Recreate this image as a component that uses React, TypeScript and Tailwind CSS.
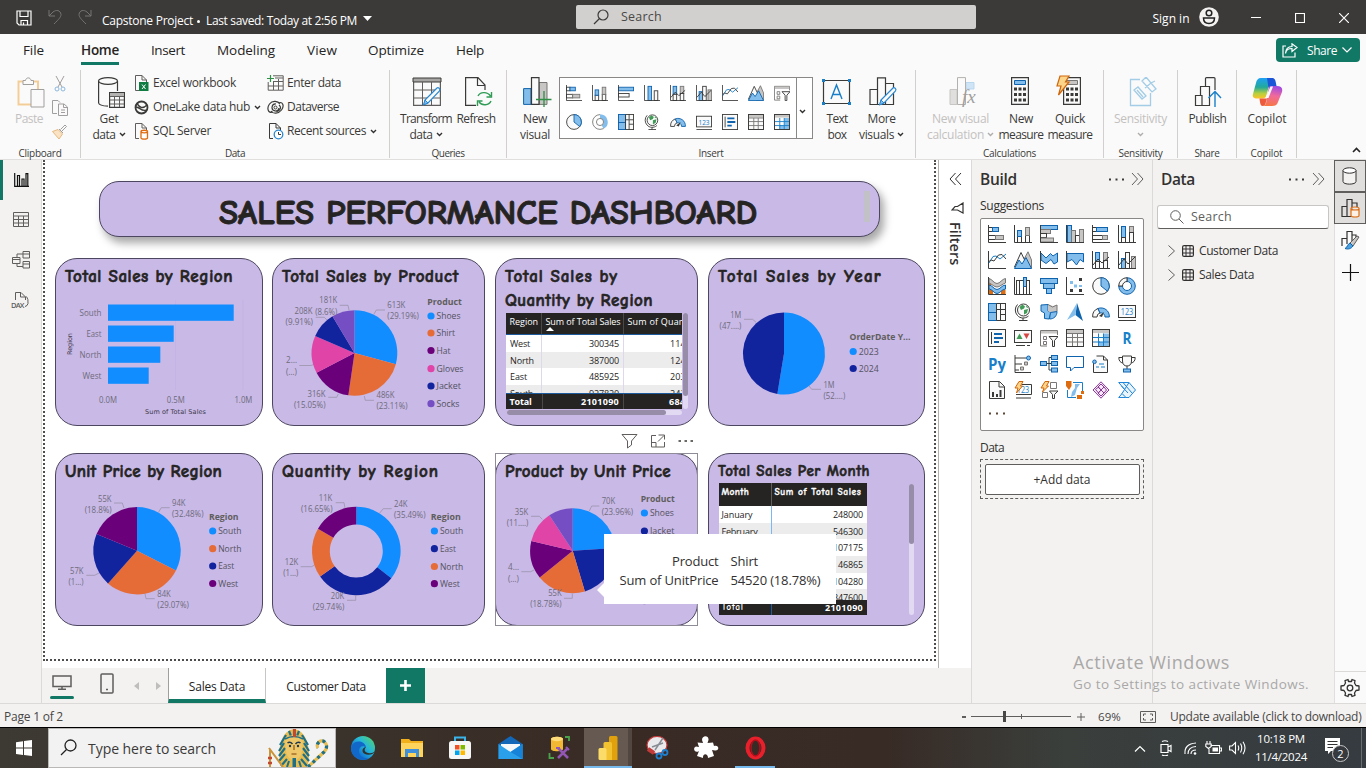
import React, { useLayoutEffect, useRef, useState } from "react";

/* ---------- text ---------- */

function Fit({ w, className = "", children }: { w: number; className?: string; children: string }) {
  const ref = useRef<HTMLSpanElement>(null);
  const [spacing, setSpacing] = useState<number | null>(null);
  useLayoutEffect(() => {
    if (ref.current && spacing === null) {
      setSpacing((w - ref.current.getBoundingClientRect().width) / children.length);
    }
  }, [w, children, spacing]);
  return (
    <span ref={ref} className={"inline-block shrink-0 whitespace-pre " + className} style={{ letterSpacing: spacing === null ? undefined : spacing + "px" }}>
      {children}
    </span>
  );
}

/* ---------- icon drawing ---------- */

type Shape = [string, string] | [string, string, number, number, number, number];

const KINDS: Record<string, { fill: string; stroke: string }> = {
  k: { fill: "none", stroke: "#3a3a38" },
  w: { fill: "#fafafa", stroke: "#3a3a38" },
  b: { fill: "#83bdeb", stroke: "#0f63ad" },
  B: { fill: "none", stroke: "#1a7fc9" },
  g: { fill: "#c8c6c4", stroke: "#797775" },
  G: { fill: "none", stroke: "#797775" },
  f: { fill: "#3a3a38", stroke: "none" },
  F: { fill: "#83bdeb", stroke: "none" },
  D: { fill: "#0f63ad", stroke: "none" },
  L: { fill: "#c8c6c4", stroke: "none" },
  o: { fill: "#dd6b10", stroke: "none" },
  O: { fill: "#fcd48a", stroke: "#d0660a" },
  e: { fill: "none", stroke: "#2f8f46" },
  E: { fill: "#3f9b55", stroke: "none" },
  r: { fill: "#d64540", stroke: "none" },
  u: { fill: "#f7e9f9", stroke: "#8a3a96" },
  w2: { fill: "#fff", stroke: "#0f63ad" },
  B2: { fill: "#eaf4fd", stroke: "#1f86d8" },
};

const AX = "M.5 0V17.5H18";
const ICONS: Record<string, Shape[]> = {
  bar1: [["w", "r", 0.5, 2.5, 4, 4], ["b", "r", 4.5, 2.5, 6, 4], ["w", "r", 0.5, 10.5, 7, 4], ["g", "r", 7.5, 10.5, 8, 4], ["k", AX]],
  col1: [["w", "r", 3.5, 11.5, 4, 6], ["b", "r", 3.5, 5.5, 4, 6], ["w", "r", 11.5, 10.5, 4, 7], ["g", "r", 11.5, 2.5, 4, 8], ["k", AX]],
  barS: [["b", "r", 0.5, 2.5, 17, 4], ["w", "r", 0.5, 9.5, 12, 4], ["k", AX]],
  colS: [["b", "r", 4.5, 1.5, 4, 16], ["w", "r", 11.5, 6.5, 4, 11], ["k", AX]],
  bar2: [["b", "r", 0.5, 0.5, 17, 4], ["g", "r", 0.5, 4.5, 10, 4], ["w", "r", 0.5, 8.5, 6, 4], ["g", "r", 0.5, 13, 13, 4], ["k", AX]],
  col2: [["b", "r", 1.5, 0.5, 4, 17], ["g", "r", 5.5, 5.5, 4, 12], ["w", "r", 9.5, 10.5, 4, 7], ["g", "r", 13.5, 4.5, 4, 13], ["k", AX]],
  bar3: [["w", "r", 0.5, 2.5, 4, 4], ["b", "r", 4.5, 2.5, 11, 4], ["w", "r", 0.5, 10.5, 10, 4], ["g", "r", 10.5, 10.5, 5, 4], ["k", AX]],
  col3: [["b", "r", 3.5, 1.5, 4, 11], ["w", "r", 3.5, 12.5, 4, 5], ["g", "r", 11.5, 1.5, 4, 6], ["w", "r", 11.5, 7.5, 4, 10], ["k", AX]],
  line: [["B", "M1 12L5 5.500L8 5L12 8L18 3"], ["k", "M1 10.500L3 9L6 10L10.500 4L14 3.500L18 8"], ["k", AX]],
  area: [["g", "M9 10L14 .8L17.500 9V17H9Z"], ["w", "M.5 16L7 1.500L14 16Z"], ["b", "M.5 17.500L5 9L8 13L12 6.500L17.500 17.500Z"]],
  area2: [["b", "M1 2L6 7L10.500 2.500L13 5L17.500 2V11L14 13L11 8.500L6 12.500L1 9Z"], ["k", AX]],
  area3: [["b", "M1 2.500H17.500V11L14 8.500L10.500 14L6 8.500L1 11Z"], ["k", AX]],
  combo1: [["b", "r", 3.5, 1.5, 4, 9], ["w", "r", 3.5, 10.5, 4, 7], ["g", "r", 11.5, 1.5, 4, 8], ["w", "r", 11.5, 9.5, 4, 8], ["k", "M1 14L6 8L10 12L17 6"], ["k", AX]],
  combo2: [["b", "r", 3.5, 7.5, 4, 10], ["w", "r", 7.5, 1.5, 4, 16], ["g", "r", 13.5, 5.5, 4, 12], ["k", "M1 14L6 8L10 13L17 6"], ["k", AX]],
  ribbon: [["o", "M1 12.500h4v4.500H1zM13 12.500h4.500v4.500H13zM1 5h2v4H1z"], ["g", "M1 1.500C4 2 6 6.500 9 6.500S14 2 17.500 1.500V6C14 7 12 10 9 10S4 7 1 6Z"], ["b", "M1 8C4 8 6 12.500 9 12.500S14 8 17.500 8V12C14 12 12 16.500 9 16.500S4 12 1 12Z"], ["k", AX]],
  waterfall: [["w", "r", 2.5, 3.5, 3, 14], ["k", "M5.500 3.500H9.500V17.500M9.500 6.500h3v8"], ["b", "r", 9.5, 0.5, 3, 9], ["w", "r", 12.5, 3.5, 3, 14], ["k", AX]],
  funnel: [["b", "r", 0.5, 1.5, 17, 5], ["b", "r", 3.5, 6.5, 11, 5], ["b", "r", 6.5, 11.5, 5, 5]],
  scatter: [["f", "M13 1h3v3h-3zM4 12h3v3H4zM13 12h3v3h-3z"], ["F", "M4 4h3v3H4zM8 7.500h3v3H8zM13 8h3v2h-3z"], ["k", AX]],
  pie: [["w", "M9 .7A8.300 8.300 0 1 0 9 17.300A8.300 8.300 0 1 0 9 .7Z"], ["b", "M9 .7A8.300 8.300 0 0 1 15.500 14.200L9 9Z"]],
  donut: [["b", "M9 .7A8.300 8.300 0 1 1 .7 9H4.500A4.500 4.500 0 1 0 9 4.500Z"], ["w", "M.7 9A8.300 8.300 0 0 1 9 .7V4.500A4.500 4.500 0 0 0 4.500 9Z"]],
  donutG: [["G", "M9 .7A8.300 8.300 0 1 0 9 17.300M9 5A4 4 0 1 0 9 13"], ["F", "M9 .3A8.700 8.700 0 0 1 13 16.700L11 13A4.500 4.500 0 0 0 9 4.700Z"], ["G", "M13 16.500L9 17.300M9 13A4 4 0 0 0 9 5"]],
  treemap: [["w", "r", 0.5, 0.5, 17, 17], ["b", "r", 0.5, 0.5, 8, 9], ["b", "r", 0.5, 9.5, 8, 8], ["k", "M8.500 .5V17.500M8.500 6.500H17.500M12.500 6.500V17.500M12.500 11.500H17.500M12.500 .5V6"]],
  globe: [["w", "M9.500 1A6 6 0 1 0 9.500 13A6 6 0 1 0 9.500 1Z"], ["E", "M5.500 4l3-2.500 2.500 2-1 2-3 1.500zM10 7l4-1-1 4-3 1.500zM12 3l2 1v1l-2-1z"], ["k", "M3.500 1.500A8 8 0 0 0 3.500 12.500C6 15.500 11 16 14.500 13M9 15v2.500M5 17.500H13.500"]],
  fmap: [["b", "M1 2L8 1.500V8L11 9.500L9 16L4.500 15.500V10L1 8Z"], ["L", "M8 1.500l5 1.500 4-1v7l-6 1-3-2z"], ["b", "M10.500 9.500L17 8.500C17 13 14 16 9.500 16Z"], ["G", "M8 1.500L12.500 4L17 2V8.500"]],
  arrow: [["D", "M11 0L17 18L9.500 12Z"], ["F", "M11 0L1 17L9.500 12Z"]],
  gauge: [["w", "M.7 14A8.300 8.300 0 0 1 6 5.500L8 10A4 4 0 0 0 5 14Z"], ["b", "M6 5.500A8.300 8.300 0 0 1 17.300 14H13A4 4 0 0 0 8 10Z"], ["f", "M7 13L12 9L10 14Z"]],
  card: [["w", "r", 0.5, 2.5, 17, 12], ["k", "M.5 17.500H18"], ["t", "123"]],
  rowcard: [["w", "r", 0.5, 0.5, 17, 17], ["k", "M3.500 3V15"], ["D", "M6 4h8v2H6zM6 8h9v2H6zM6 12h5v2H6z"]],
  kpi: [["w", "r", 0.5, 1.5, 17, 12], ["E", "M2.500 10L5.500 4.500L8.500 10Z"], ["r", "M9.500 4.500H15.500L12.500 10Z"], ["k", "M2 16.500H11M13 16.500h3"]],
  slicer: [["G", "M.5 1.500H17.500V6M.5 1.500V17H7"], ["L", "M1 2H17V4.500H1z"], ["G", "M3.500 7.500h3v3h-3zM3.500 12.500h3v3h-3z"], ["w", "M9 7.500H18L14.500 11.500V17.500H12.500V11.500Z"]],
  table: [["w", "r", 0.5, 0.5, 17, 17], ["L", "M1 1H17V4H1z"], ["G", "M1 4.500H17M1 8.500H17M1 13H17M6.500 4.500V17M11.500 4.500V17"], ["k", "M.5 .5H17.500V17.500H.5Z"]],
  matrix: [["w", "r", 0.5, 0.5, 17, 17], ["L", "M1 1H17V4H1z"], ["F", "M11.500 4.500H17V17H11.500zM6 13H12V17H6z"], ["B", "M6.500 13H17M1 8.500H17M6.500 4.500V17M11.500 4.500V17M1 13H8"], ["k", "M.5 .5H17.500V17.500H.5Z"]],
  R: [["t", "R"]],
  Py: [["t", "Py"]],
  keyinf: [["k", "M1 0V17.500M1 3H12M1 9H8M1 15H5M1 17.500H17"], ["b", "M14.500 1A2 2 0 1 0 14.500 5A2 2 0 1 0 14.500 1Z"], ["g", "M10.500 7h3v3h-3zM6.500 12h3v3h-3z"]],
  decomp: [["k", "M6 8.500H12M9 2.500V15M9 2.500h3M9 15h3"], ["b", "r", 0.5, 6.5, 6, 4], ["b", "r", 11.5, 0.5, 6, 4], ["b", "r", 11.5, 6.5, 6, 4], ["b", "r", 11.5, 13, 6, 4]],
  qna: [["w2", "M.5 1.500H17.500V12.500H8L4.500 16V12.500H.5Z"]],
  narrative: [["w", "M4.500 1H11.500L15.500 5V17.500H1.500V8"], ["k", "M11.500 1V5H15.500"], ["B", "M7 9h5M4 12h3M9 12h4"], ["b", "M2.500 5A1.800 1.800 0 1 0 2.500 8.600A1.800 1.800 0 1 0 2.500 5Z"]],
  trophy: [["w", "M4.500 1H13.500V6C13.500 9.500 11.500 11 9 11S4.500 9.500 4.500 6Z"], ["k", "M4.500 2.500H.8C.8 6 2.500 7.500 4.800 8M13.500 2.500H17.200C17.200 6 15.500 7.500 13.200 8M9 11V14"], ["b", "r", 5.5, 14, 7, 3]],
  paginated: [["w", "M1.500 .5H11.500L16.500 5.500V17.500H1.500Z"], ["k", "M11 .5V6H16.500"], ["f", "M4 11h2v5H4zM8 13h2v3H8zM11.500 9h2v7h-2z"]],
  cardN: [["k", "M8 3.500H17.500V13.500H2M2 17H17"], ["t", "123"], ["O", "M5 .5H9L6.500 5H8.500L2.500 12L4 7H1Z"]],
  slicerN: [["G", "M10.500 1.500h6v6h-6zM2.500 11.500h5v5h-5z"], ["w", "M9.500 10H18L14.500 13.500V17.500H12.500V13.500Z"], ["O", "M5 .5H9L6.500 5H8.500L2.500 11L4 7H1Z"]],
  arcgis: [["B", "M7 1.500H16.500V10M1.500 9V16.500H10"], ["F", "M9 3l5 0-3 4-2 7-4 2 1-5 3-4z"], ["o", "M0 0h5.500v5L3 9 0 5zM15 10h3v3h-3zM11 14h5v4h-5z"]],
  papps: [["u", "M9 .8L17 9L9 17.200L1 9Z"], ["u", "M9 3L12 6L9 9L6 6ZM9 9L12 12L9 15L6 12ZM3.500 8.500L6.500 6L9 9L6.500 12ZM14.500 9L12 6L9 9L12 12Z"]],
  automate: [["B2", "M.7 1.500H11L17.500 9L11 16.500H.7L7 9Z"], ["B2", "M5 1.500L14 12M11 1.500L4 12.500L8 16.500M3.500 5L10 12"]],
};

function Viz({ n, s = 18 }: { n: string; s?: number }) {
  return (
    <svg width={s} height={s} viewBox="0 0 18 18" className="block shrink-0">
      {ICONS[n].map((it, i) => {
        if (it[0] === "t") {
          const small = it[1] === "123";
          return (
            <text key={i} x={9} y={small ? 12 : 15} textAnchor="middle" fontFamily="Open Sans" fontSize={small ? 8.5 : 16} fontWeight={small ? 400 : 700} fill="#1a7fc9" textLength={it[1] === "R" ? 9 : small ? 12.5 : 18} lengthAdjust="spacingAndGlyphs">
              {it[1]}
            </text>
          );
        }
        const c = KINDS[it[0]];
        return it[1] === "r" ? <rect key={i} x={it[2]} y={it[3]} width={it[4]} height={it[5]} {...c} /> : <path key={i} d={it[1]} {...c} />;
      })}
    </svg>
  );
}

function Svg({ w, h, children, className = "" }: { w: number; h: number; children: React.ReactNode; className?: string }) {
  return (
    <svg width={w} height={h} viewBox={`0 0 ${w} ${h}`} fill="none" className={"block shrink-0 " + className}>
      {children}
    </svg>
  );
}

const Chev = ({ c = "#323130" }: { c?: string }) => (
  <Svg w={7} h={5}>
    <path d="M1 1L3.500 3.500L6 1" stroke={c} strokeWidth="1.400" />
  </Svg>
);

/* ---------- title bar & ribbon ---------- */

function TitleBar() {
  return (
    <header className="flex h-[34px] shrink-0 items-center bg-[#3b3a39] text-white">
      <Svg w={16} h={16} className="ml-[16px] mt-px">
        <path d="M1 1H15V15H3L1 13ZM4 1V6.500H12V1M5 15V10.500H11.500V15M7.500 15V12.500" stroke="#fff" strokeWidth="1.200" />
      </Svg>
      <Svg w={14} h={16} className="ml-[16px]">
        <path d="M1 1V7H7M1 7L5 3C8 .5 12.500 1 13 5.500C13 8 11 10 6 15" stroke="#767472" />
      </Svg>
      <Svg w={14} h={16} className="ml-4">
        <path d="M13 1V7H7M13 7L9 3C6 .5 1.500 1 1 5.500C1 8 3 10 8 15" stroke="#767472" />
      </Svg>
      <div className="ml-[10px] flex w-[270px] items-center pt-2 text-[12px]">
        <Fit w={91}>Capstone Project</Fit>
        <span className="mx-[4px] size-[3px] rounded-full bg-white" />
        <Fit w={151} className="ml-[2.500px]">Last saved: Today at 2:56 PM</Fit>
        <Svg w={9} h={6} className="ml-[6px] -mt-1">
          <path d="M0 0H9L4.500 5Z" fill="#fff" />
        </Svg>
      </div>
      <div className="ml-[204px] flex h-6 w-[400px] items-center rounded-[2px] bg-[#d2d0ce] text-[#4a4846]">
        <Svg w={16} h={16} className="ml-[17px]">
          <circle cx="10" cy="6" r="5" stroke="#3a3a38" strokeWidth="1.200" />
          <path d="M6.500 9.500L1 15" stroke="#3a3a38" strokeWidth="1.200" />
        </Svg>
        <Fit w={41} className="mt-px ml-[12px] text-[12.500px]">Search</Fit>
      </div>
      <Fit w={37} className="mt-[3px] ml-[176.500px] text-[12px]">Sign in</Fit>
      <Svg w={20} h={20} className="ml-[9.500px]">
        <circle cx="10" cy="10" r="9.800" fill="#f3f2f1" />
        <circle cx="10" cy="6" r="2.800" stroke="#222" strokeWidth="1.500" />
        <path d="M4.500 11H15.500C15.500 15 13 16.500 10 16.500S4.500 15 4.500 11Z" stroke="#222" strokeWidth="1.500" />
      </Svg>
      <Svg w={10} h={10} className="ml-8"><path d="M0 5.500H10" stroke="#fff" /></Svg>
      <Svg w={10} h={10} className="mt-px ml-[34px]"><path d="M.5 .5H9.500V9.500H.5Z" stroke="#fff" strokeWidth="1.200" /></Svg>
      <Svg w={10} h={10} className="mt-px ml-[34px]"><path d="M0 0L10 10M10 0L0 10" stroke="#fff" strokeWidth="1.200" /></Svg>
    </header>
  );
}

const TABS: [string, number, string][] = [["File", 21, "w-[23px]"], ["Home", 38, "w-[37px]"], ["Insert", 34, "w-8"], ["Modeling", 58, "w-8"], ["View", 30, "w-8"], ["Optimize", 56, "w-[31px]"], ["Help", 28, "w-8"]];

function Tabs() {
  return (
    <nav className="flex h-8 shrink-0 items-start text-[13.500px] text-[#252423]">
      {TABS.map(([t, w, gap]) => (
        <React.Fragment key={t}>
          <span className={gap} />
          <div className={"h-[31px] pt-1.5 " + (t === "Home" ? "border-b-[3px] border-[#117865] font-semibold" : "")}>
            <Fit w={w} className="leading-5">{t}</Fit>
          </div>
        </React.Fragment>
      ))}
      <div className="mt-[4px] mr-[6px] ml-auto flex h-6 w-[84px] items-center rounded-[4px] bg-[#117865] text-[12px] text-white">
        <Svg w={16} h={15} className="ml-[6px]">
          <path d="M4 3H1V14H13V9.500M3.500 10.500C4 7 6.500 5.500 10 5.500V8.500L15 4.500L10 .8V3.500C6 3.500 3.500 6 3.500 10.500Z" stroke="#fff" strokeWidth="1.200" />
        </Svg>
        <Fit w={30} className="mt-px ml-[9px]">Share</Fit>
        <Svg w={10} h={6} className="ml-[5px]"><path d="M.5 .5L5 5L9.500 .5" stroke="#fff" strokeWidth="1.200" /></Svg>
      </div>
    </nav>
  );
}

function Big({ cls, icon, a, b, chev, off }: { cls: string; icon: React.ReactNode; a: [string, number]; b?: [string, number]; chev?: boolean; off?: boolean }) {
  return (
    <div className={"flex shrink-0 flex-col items-center text-[12px] leading-4 " + cls + (off ? " text-[#c3c1bf]" : " text-[#3b3a39]")}>
      <div className="mb-[2.500px] flex h-[32px] items-start justify-center pt-px">{icon}</div>
      <Fit w={a[1]}>{a[0]}</Fit>
      <div className="flex h-4 items-center gap-[3px]">
        {b && <Fit w={b[1]}>{b[0]}</Fit>}
        {chev && <Chev c={off ? "#b0aeac" : "#323130"} />}
      </div>
    </div>
  );
}

function Group({ cls, name, w, children }: { cls: string; name: string; w: number; children: React.ReactNode }) {
  return (
    <section className={"flex h-[88px] shrink-0 flex-col border-r border-[#d1d0ce] pt-[6px] " + cls}>
      <div className="flex h-[70px]">{children}</div>
      <div className="flex h-3 justify-center text-[10px] leading-[15px] text-[#3b3a39]"><Fit w={w}>{name}</Fit></div>
    </section>
  );
}

function Small({ icon, t, w, chev, wide }: { icon: React.ReactNode; t: string; w: number; chev?: boolean; wide?: boolean }) {
  return (
    <div className="flex h-6 items-center text-[12px] text-[#3b3a39]">
      <span className={"flex shrink-0 justify-start " + (wide ? "w-[20px]" : "w-[19px]")}>{icon}</span>
      <Fit w={w}>{t}</Fit>
      {chev && <span className="ml-1"><Chev /></span>}
    </div>
  );
}

const Doc = ({ children }: { children: React.ReactNode }) => (
  <Svg w={15} h={17}>
    <path d="M5 15.500H1.500V.5H8L12.500 5V7M8 .5V5H12.500" stroke="#605e5c" />
    {children}
  </Svg>
);

const Pencil = ({ x, y }: { x: number; y: number }) => (
  <g transform={`translate(${x} ${y})`}>
    <path d="M2 13L14 1C15 0 18 1.500 16.500 4L5 16L1 17.500Z" fill="#fafafa" stroke="#2b88d0" strokeWidth="1.200" />
    <path d="M2 13L5 16L.5 18Z" fill="#83bdeb" stroke="#2b88d0" />
  </g>
);

const Calc = ({ x, c }: { x: number; c: string }) => (
  <g transform={`translate(${x} 0)`}>
    <path d="M.6 .6H17.400V27.400H.6Z" fill="#fafafa" stroke="#3a3a38" strokeWidth="1.200" />
    <path d="M3.500 3.500H14.500V7.500H3.500Z" fill={c} stroke={c === "#83bdeb" ? "#0f63ad" : "#797775"} />
    <path d="M3 10.500h3v3H3zM7.500 10.500h3v3h-3zM12 10.500h3v3h-3zM3 16h3v3H3zM7.500 16h3v3h-3zM12 16h3v3h-3zM3 21.500h3v3H3zM7.500 21.500h3v3h-3zM12 21.500h3v3h-3z" fill="#3a3a38" />
  </g>
);

const GALLERY = [
  ["bar1", "col1", "barS", "colS", "combo1", "combo2", "line", "area", "slicer"],
  ["pie", "donutG", "treemap", "globe", "gauge", "card", "rowcard", "table", "matrix"],
];

function Ribbon() {
  return (
    <div className="flex h-[94px] shrink-0 border-b border-[#e1dfdd] pt-1">
      <Group cls="w-[81px]" name="Clipboard" w={43}>
        <Big cls="ml-[8px] w-[42px]" off a={["Paste", 28]} icon={
          <Svg w={28} h={31} className="ml-1">
            <path d="M7 4.500H1.500V27.500H14M16 4.500H21V12" stroke="#f3cd97" strokeWidth="2" />
            <path d="M6 3.500H8.500C9 0 13.500 0 14 3.500H16.500V7.500H6ZM14 12.500H27V30H14Z" fill="#fafafa" stroke="#a19f9d" />
          </Svg>} />
        <div className="ml-[2px] flex flex-col items-center gap-2">
          <Svg w={16} h={16}><path d="M4 0L10 11M12 0L6 11" stroke="#a19f9d" /><circle cx="5" cy="13" r="2" stroke="#8cb8de" /><circle cx="11" cy="13" r="2" stroke="#8cb8de" /></Svg>
          <Svg w={16} h={16}><path d="M5 13.500H.5V.5H6L8 2.500M6.500 4H12L15.500 7V15.500H6.500ZM11.500 4V7.500H15.500M9 10h4M9 12.500h4" stroke="#a19f9d" /></Svg>
          <Svg w={16} h={16}><path d="M7 5L11 9M10 7L14.500 2.500L13 1L8.500 5.500" stroke="#a19f9d" /><path d="M.5 7.500L6 5.500L10.500 10L7 15Z" fill="#f9e3c4" stroke="#e5b981" /></Svg>
        </div>
      </Group>
      <Group cls="w-[309px]" name="Data" w={20}>
        <Big cls="ml-[8px] w-[40px]" a={["Get", 19]} b={["data", 23]} chev icon={
          <Svg w={29} h={32} className="ml-[5px]">
            <path d="M1.600 4V26C2 28 6 29 11 29.200M20.500 4V14" stroke="#3a3a38" strokeWidth="1.200" />
            <ellipse cx="11" cy="4" rx="9.500" ry="3.300" stroke="#3a3a38" strokeWidth="1.200" />
            <path d="M12.600 15.600H27.400V30.400H12.600Z" fill="#fafafa" stroke="#3a3a38" strokeWidth="1.200" />
            <path d="M13 16h14v3H13z" fill="#b5b3b1" /><path d="M13 19.500H27M13 23H27M13 27H27M17.500 19V30M22.500 19V30" stroke="#605e5c" />
          </Svg>} />
        <div className="-mt-[5px] ml-[5px] w-[133px]">
          <Small t="Excel workbook" w={83} icon={<Doc><path d="M5 7h9.500v9H5z" fill="#107c41" /><path d="M8 9.500L11.500 14M11.500 9.500L8 14" stroke="#fff" /></Doc>} />
          <Small t="OneLake data hub" w={97} chev icon={<Svg w={15} h={15}><circle cx="7.500" cy="7.500" r="6" stroke="#3a3a38" strokeWidth="1.800" /><path d="M2 7C6 7 7 12 13 10M3 3C5 8 9 9 13 5" stroke="#3a3a38" strokeWidth="1.400" /></Svg>} />
          <Small t="SQL Server" w={58} icon={<Doc><path d="M7 8.500C7 6.800 13.500 6.800 13.500 8.500V15C13.500 16.500 7 16.500 7 15ZM7 8.500C7 10.200 13.500 10.200 13.500 8.500" fill="#fff" stroke="#dd6b10" strokeWidth="1.300" /></Doc>} />
        </div>
        <div className="-mt-[5px]">
          <Small wide t="Enter data" w={54} icon={<Svg w={17} h={17}><path d="M6 .8H16.200V15.200H1.200V7M1 11H16M6.500 6V15M11.500 4V15M6 6.500H16M8 3h8" stroke="#605e5c" /><path d="M3.500 0V7M0 3.500H7" stroke="#2f8f46" strokeWidth="1.200" /></Svg>} />
          <Small wide t="Dataverse" w={52} icon={<Svg w={17} h={15}><path d="M6 12C1 14-.5 8 2.500 4S11 1 13 4M11 3C16 1 17.500 6 14.500 10S6 14 4 11M9 4A3.500 3.500 0 1 0 12 8M8.500 11A3.500 3.500 0 0 0 12 5" stroke="#3a3a38" strokeWidth="1.200" /><circle cx="8.500" cy="7.500" r="1.500" stroke="#3a3a38" /></Svg>} />
          <Small wide t="Recent sources" w={79} chev icon={<Svg w={17} h={17}><path d="M6 15.500H2.500V.5H9L13.500 5V7M9 .5V5H13.500" stroke="#3a3a38" /><circle cx="11.500" cy="11.500" r="4.300" fill="#fff" stroke="#2b88d0" strokeWidth="1.300" /><path d="M11.500 9V11.500H14" stroke="#3a3a38" /></Svg>} />
        </div>
      </Group>
      <Group cls="w-[117px]" name="Queries" w={33}>
        <Big cls="ml-[8px] w-[56px]" a={["Transform", 52]} b={["data", 23]} chev icon={
          <Svg w={31} h={31} className="ml-0.5">
            <path d="M1.600 1.600H28.400V28.400H1.600Z" stroke="#605e5c" strokeWidth="1.200" /><path d="M1 1h28v4H1z" fill="#a8a6a4" stroke="#3a3a38" />
            <path d="M1 13H28M1 21H28M10.500 5V28M19.500 5V28" stroke="#605e5c" /><Pencil x={11} y={10} />
          </Svg>} />
        <Big cls="ml-[1px] w-[42px]" a={["Refresh", 39]} icon={
          <Svg w={29} h={31} className="ml-[5px]">
            <path d="M12 28.400H1.600V.6H14L21 8V13M13.500 .6V8.500H21" stroke="#3a3a38" strokeWidth="1.200" />
            <path d="M14 19C16 15 23 14 26.500 19M27.500 15V20H22.500M27 24C25 28.500 18 29 15 25M13.500 29V24H18.500" stroke="#2f9b55" strokeWidth="1.400" />
          </Svg>} />
      </Group>
      <Group cls="w-[409px]" name="Insert" w={25}>
        <Big cls="ml-[6px] w-[44px]" a={["New", 24]} b={["visual", 30]} icon={
          <Svg w={30} h={31} className="ml-[3px]">
            <path d="M1.600 11.600H9V27.400H1.600Z" fill="#83bdeb" stroke="#0f63ad" /><path d="M17 5.500H25V27.400H17Z" fill="#c8c6c4" stroke="#797775" />
            <path d="M9.500 .6H17V27.400H9.500Z" fill="#fafafa" stroke="#3a3a38" strokeWidth="1.200" /><path d="M22 14V30M14 22.500H29.500" stroke="#2f8f46" strokeWidth="1.300" />
          </Svg>} />
        <div className="mt-[1px] ml-[2px] flex h-[62px] w-[254px] border border-[#8a8886] bg-white">
          <div className="flex w-[237px] flex-col gap-[13px] border-r border-[#8a8886] pt-[7px] pl-[6px]">
            {GALLERY.map((r, i) => <div key={i} className="flex gap-[10px]">{r.map((n) => <Viz key={n} n={n} s={16} />)}</div>)}
          </div>
          <div className="flex flex-1 items-center justify-center pt-1.5 pr-1"><Chev /></div>
        </div>
        <Big cls="ml-[4px] w-[40px]" a={["Text", 21]} b={["box", 19]} icon={
          <Svg w={31} h={30} className="-ml-[2px]"><path d="M2.500 3.500H28.500V26.500H2.500Z" stroke="#3a3a38" strokeWidth="1.200" /><path d="M1 2h3v3H1zM27 2h3v3h-3zM1 25h3v3H1zM27 25h3v3h-3z" fill="#1a7fc9" /><path d="M10 22L15.500 8L21 22M12 17.500H19" stroke="#1a7fc9" strokeWidth="1.400" /></Svg>} />
        <Big cls="ml-[1px] w-[47px]" a={["More", 28]} b={["visuals", 35]} chev icon={
          <Svg w={31} h={31} className="ml-1"><path d="M2 12.500H9.500V27.500H2ZM17.500 6.500H25.500V27.500H17.500ZM9.500 .8H17.500V27.500H9.500Z" stroke="#3a3a38" strokeWidth="1.200" /><Pencil x={11} y={10} /></Svg>} />
      </Group>
      <Group cls="w-[188px]" name="Calculations" w={53}>
        <Big cls="ml-[9px] w-[71px]" off a={["New visual", 57]} b={["calculation", 57]} chev icon={
          <Svg w={30} h={31} className="ml-1"><path d="M2 12.500H9V27.500H2Z" fill="#e1dfdd" stroke="#c8c6c4" /><path d="M18 5.500H26V12H18Z" fill="#cfe4f5" stroke="#b9d7ef" /><path d="M9.500 .6H17.500V27.500H9.500Z" fill="#fafafa" stroke="#b3b0ad" /><text x="14" y="26" fontFamily="Liberation Serif" fontStyle="italic" fontSize="19" fill="#a19f9d">fx</text></Svg>} />
        <Big cls="ml-[1px] w-[48px]" a={["New", 24]} b={["measure", 45]} icon={<Svg w={18} h={30} className="-ml-0.5"><Calc x={0} c="#83bdeb" /></Svg>} />
        <Big cls="ml-[1px] w-[48px]" a={["Quick", 30]} b={["measure", 45]} icon={<Svg w={25} h={31} className="-mt-0.5 -ml-1"><g transform="translate(0 2)"><Calc x={7} c="#c8c6c4" /></g><path d="M4 1H13L9.500 7H13L2.500 20L5 11H1Z" fill="#fcd48a" stroke="#d0660a" strokeWidth="1.200" /></Svg>} />
      </Group>
      <Group cls="w-[74px]" name="Sensitivity" w={44}>
        <Big cls="w-[73px]" off a={["Sensitivity", 53]} chev icon={
          <Svg w={28} h={31} className="ml-1"><path d="M11 2.500H1.500V28.500H21.500V16" stroke="#a3cde6" strokeWidth="1.300" /><path d="M5 13L9 10L17 19L13 22ZM8 13L14 20M13 4L17 0L27 12L23 15ZM16 11L22 6L26 4" stroke="#a3cde6" strokeWidth="1.300" /></Svg>} />
      </Group>
      <Group cls="w-[59px]" name="Share" w={25}>
        <Big cls="w-[59px]" a={["Publish", 38]} icon={
          <Svg w={28} h={31}><path d="M1.500 18.500H8V28.500H1.500ZM6.500 18V9.500H15.500V28.500H8M11.500 9V1.500Q11.500 .6 12.500 .6H20Q21 .6 21 1.500V13" stroke="#3a3a38" strokeWidth="1.200" /><path d="M21 30V15M14.500 21L21 14.500L27 21" stroke="#1a7fc9" strokeWidth="1.400" /></Svg>} />
      </Group>
      <Group cls="w-[60px]" name="Copilot" w={32}>
        <Big cls="w-[60px]" a={["Copilot", 39]} icon={
          <Svg w={31} h={30}>
            <defs>
              <linearGradient id="cp1" x1="0" y1="0" x2="0" y2="1"><stop offset="0" stopColor="#1ea0f5" /><stop offset=".45" stopColor="#22a99a" /><stop offset=".75" stopColor="#b6cf3f" /><stop offset="1" stopColor="#ffc328" /></linearGradient>
              <linearGradient id="cp2" x1=".5" y1="0" x2=".3" y2="1"><stop offset="0" stopColor="#a34be0" /><stop offset=".45" stopColor="#f06a9c" /><stop offset="1" stopColor="#f7773f" /></linearGradient>
            </defs>
            <path d="M17 9H25C29 9 31 11 30 15L26 25C25 28 23 29 20 29H10C13 29 14 27 14.500 24Z" fill="url(#cp2)" />
            <path d="M20 1H9C6 1 4.500 3 4 6L1 17C0 20 2 21.500 5 21.500H11C13 21.500 14 20 14.500 18L18 5C18.500 3 19 2 20 1Z" fill="url(#cp1)" />
            <path d="M15 1H20C23 1 23.500 3 24.500 9H19C17 9 17 10 16.500 11Z" fill="#1b55d8" />
            <path d="M8 21.500H15L14 25C13.500 27.500 12.500 29 10.500 29C8.500 29 8 26 7.500 21.500Z" fill="#ee5a3c" />
            <path d="M18.500 9.500H21L16.500 21H13.500Z" fill="#fafafa" />
          </Svg>} />
      </Group>
      <div className="flex flex-1 items-end justify-end pr-[5px] pb-[6px]"><Svg w={9} h={6}><path d="M1 5L4.500 1.500L8 5" stroke="#252423" strokeWidth="1.600" /></Svg></div>
    </div>
  );
}

/* ---------- charts ---------- */

const C = { sky: "#118dff", orange: "#e66c37", purple: "#6b007b", pink: "#e044a7", navy: "#12239e", violet: "#744ec2" };

type Lab = [string, number, number, number, "start" | "end"];

function T({ x, y, w, a = "start", children, size = 8.3, color = "#6f6b7c", bold }: { x: number; y: number; w?: number; a?: "start" | "end" | "middle"; children: string; size?: number; color?: string; bold?: boolean }) {
  return (
    <text x={x} y={y + size * 0.36} textAnchor={a} fontFamily="Open Sans, sans-serif" fontSize={size} fontWeight={bold ? 700 : 400} fill={color} textLength={w} lengthAdjust="spacingAndGlyphs">
      {children}
    </text>
  );
}

function Pie({ cx, cy, r, inner = 0, data }: { cx: number; cy: number; r: number; inner?: number; data: [number, string][] }) {
  let acc = 0;
  const pt = (f: number, rad: number) => `${cx + rad * Math.sin(f * 2 * Math.PI)} ${cy - rad * Math.cos(f * 2 * Math.PI)}`;
  return (
    <>
      {data.map(([v, c], i) => {
        const a = acc / 100;
        acc += v;
        const b = acc / 100;
        const big = b - a > 0.5 ? 1 : 0;
        const tail = inner ? `L${pt(b, inner)}A${inner} ${inner} 0 ${big} 0 ${pt(a, inner)}Z` : `L${cx} ${cy}Z`;
        return <path key={i} d={`M${pt(a, r)}A${r} ${r} 0 ${big} 1 ${pt(b, r)}${tail}`} fill={c} />;
      })}
    </>
  );
}

function Labels({ labels, lines }: { labels: Lab[]; lines: string[] }) {
  return (
    <>
      {lines.map((d) => <polyline key={d} points={d} fill="none" stroke="#9b93ab" strokeWidth=".8" />)}
      {labels.map(([t, x, y, w, a]) => <T key={t + y} x={x} y={y} w={w} a={a}>{t}</T>)}
    </>
  );
}

function Legend({ x, y, title, tw, items }: { x: number; y: number; title: string; tw: number; items: [string, number, number, string][] }) {
  return (
    <>
      <T x={x} y={y} w={tw} size={9.2} bold color="#605e5c">{title}</T>
      {items.map(([t, iy, w, c]) => (
        <g key={t}>
          <circle cx={x + 3.700} cy={iy} r="3.600" fill={c} />
          <T x={x + 9.200} y={iy} w={w} size={9.4} color="#55525f">{t}</T>
        </g>
      ))}
    </>
  );
}

const COMIC = "font-['Comic_Sans_MS','Comic_Neue','Lato',sans-serif] font-bold";
const HEAVY = " text-[#252423] [-webkit-text-stroke:0.6px_#252423]";

function Card({ cls, title, tw, children, small }: { cls: string; title: string; tw: number; children: React.ReactNode; small?: boolean }) {
  return (
    <section className={"flex shrink-0 flex-col overflow-hidden rounded-[22px] border border-[#4d4660] bg-[#c8b9e6] " + cls}>
      <h3 className={"flex shrink-0 items-center pl-[9px] " + (small ? "mb-[2px] h-[34px] text-[15px] " : "h-9 text-[17px] ") + COMIC + HEAVY}><Fit w={tw}>{title}</Fit></h3>
      {children}
    </section>
  );
}

function Chart({ x, y, w, h, children }: { x: number; y: number; w: number; h: number; children: React.ReactNode }) {
  return <svg width={w} height={h} viewBox={`${x} ${y} ${w} ${h}`} className="block shrink-0">{children}</svg>;
}

function RegionTable() {
  const rows: [string, string, string, number][] = [["West", "300345", "11405", 20], ["North", "387000", "12420", 24], ["East", "485925", "20355", 17], ["South", "927820", "24290", 23]];
  return (
    <div className="ml-[10px] flex h-[104px] w-[183px] flex-col text-[9px] text-[#252423]">
      <div className="flex">
        <div className="flex h-[96px] w-[176px] flex-col overflow-hidden bg-white">
          <div className="flex h-[22px] shrink-0 border-b border-[#1c5a9c] bg-[#252423] text-white">
            <div className="w-9 shrink-0 border-r border-[#4a4948] pt-[2px] pl-[3.500px]"><Fit w={28.5}>Region</Fit></div>
            <div className="w-[82px] shrink-0 border-r border-[#4a4948] pt-[2px] pl-[3.500px] leading-[13px]"><Fit w={75}>Sum of Total Sales</Fit>
              <Svg w={8} h={4} className="-mt-[1px]"><path d="M0 4L4 0L8 4Z" fill="#fff" /></Svg>
            </div>
            <div className="w-[90px] shrink-0 pt-[2px] pl-[3.500px]"><Fit w={71}>Sum of Quantity</Fit></div>
          </div>
          <div className="h-[58px] overflow-hidden">
            {rows.map(([a, b, c, w], i) => (
              <div key={a} className={"flex h-[16.500px] " + (i % 2 ? "bg-[#ececec]" : "bg-white")}>
                <div className="h-full w-9 shrink-0 border-r border-[#ddd8ec] pt-[2px] pl-[4px]"><Fit w={w}>{a}</Fit></div>
                <div className="flex h-full w-[82px] shrink-0 justify-end border-r border-[#ddd8ec] pt-[2px] pr-[4px]"><Fit w={30}>{b}</Fit></div>
                <div className="flex w-[72px] shrink-0 justify-end pt-[2px]"><Fit w={26}>{c}</Fit></div>
              </div>
            ))}
          </div>
          <div className="flex h-4 items-center border-t border-[#1c5a9c] bg-[#252423] font-bold text-white">
            <div className="w-9 shrink-0 pl-[3.500px]"><Fit w={22}>Total</Fit></div>
            <div className="flex h-full w-[82px] shrink-0 items-center justify-end border-x border-[#4a4948] pr-[4px]"><Fit w={38}>2101090</Fit></div>
            <div className="flex w-[72px] shrink-0 justify-end"><Fit w={27}>68470</Fit></div>
          </div>
        </div>
        <div className="ml-[1px] h-[96px] w-[5px] rounded-full bg-[#e2d9f3]"><div className="h-[83px] rounded-full bg-[#978da9]" /></div>
      </div>
      <div className="mt-[1px] ml-[1px] h-[5px] w-[175px] rounded-full bg-[#e2d9f3]"><div className="h-[5px] w-[159px] rounded-full bg-[#978da9]" /></div>
    </div>
  );
}

function MonthTable() {
  const rows: [string, string, number, number][] = [["January", "248000", 31, 30], ["February", "546300", 36, 30], ["", "107175", 0, 30], ["", "46865", 0, 25], ["", "104280", 0, 30], ["", "347600", 0, 30]];
  return (
    <div className="-mt-[7px] ml-[9.500px] flex text-[9px] text-[#252423]">
      <div className="h-[132px] w-[148.500px] overflow-hidden bg-white">
        <div className={"flex h-[23px] bg-[#252423] text-[9.500px] text-white [-webkit-text-stroke:0.3px_#fff] " + COMIC}>
          <div className="w-[53px] border-r border-[#605e5c] pt-[2px] pl-[3px]"><Fit w={27.500}>Month</Fit></div>
          <div className="pt-[2px] pl-[3px]"><Fit w={87}>Sum of Total Sales</Fit></div>
        </div>
        <div className="h-[94px] overflow-hidden">
          {rows.map(([m, v, mw, vw], i) => (
            <div key={v} className={"flex h-[16.700px] " + (i % 2 ? "bg-[#ececec]" : "bg-white")}>
              <div className="h-full w-[53px] shrink-0 border-r border-[#79b8f0] pt-[2px] pl-[3px]">{m && <Fit w={mw}>{m}</Fit>}</div>
              <div className="flex flex-1 justify-end pt-[2px] pr-[4px]"><Fit w={vw}>{v}</Fit></div>
            </div>
          ))}
        </div>
        <div className="flex h-[15px] items-center bg-[#252423] text-white">
          <div className={"h-full w-[53px] border-r border-[#1c5a9c] pl-[3px] text-[9.500px] " + COMIC}><Fit w={22}>Total</Fit></div>
          <div className="flex flex-1 justify-end pr-[4px] font-bold"><Fit w={38}>2101090</Fit></div>
        </div>
      </div>
      <div className="mt-[1px] ml-[42px] h-[131px] w-[5px] rounded-full bg-[#e2d9f3]"><div className="h-[60px] rounded-full bg-[#978da9]" /></div>
    </div>
  );
}

function Canvas() {
  return (
    <div className="relative flex h-[508px] w-[897px] flex-col border-r border-[#b3b0ad] bg-white">
      <div className="ml-[1px] h-[501px] w-[893px] border-x-2 border-b-2 border-dotted border-[#4f4d4b]">
        <div className="mt-[21px] ml-[54px] flex h-[56px] w-[781px] items-center rounded-[20px] border border-[#4d4660] bg-[#c8b9e6] shadow-[4px_6px_8px_rgba(0,0,0,0.35)]">
          <h1 className={"mt-[7px] ml-[119px] flex-1 text-[35px] leading-10 [-webkit-text-stroke:0.9px_#252423] text-[#252423] " + COMIC}><Fit w={538}>SALES PERFORMANCE DASHBOARD</Fit></h1>
          <span className="mr-[9px] mb-[5px] h-[31px] w-[6px] bg-[#c3c1c8]" />
        </div>
        <div className="mt-[21px] ml-[10px] flex">
          <Card cls="h-[168px] w-[208px]" title="Total Sales by Region" tw={168}>
            <Chart x={56} y={295} w={206} h={130}>
              <path d="M175.500 300V390M243 300V390" stroke="#c3b4e4" />
              {([["South", 125.7, 22], ["East", 65.7, 15], ["North", 52.3, 22], ["West", 40.7, 19]] as [string, number, number][]).map(([t, w, tw], i) => (
                <g key={t}>
                  <rect x="108" y={304.500 + i * 21} width={w} height="16.300" fill={C.sky} />
                  <T x={101.500} y={313.500 + i * 21} w={tw} a="end">{t}</T>
                </g>
              ))}
              {["0.0M", "0.5M", "1.0M"].map((t, i) => <T key={t} x={108 + i * 67.700} y={400.500} w={18} a="middle">{t}</T>)}
              <text x="175.500" y="413.500" textAnchor="middle" fontFamily="DejaVu Sans" fontSize="6.500" fill="#3f3a4a" textLength="61">Sum of Total Sales</text>
              <text transform="translate(72 344) rotate(-90)" textAnchor="middle" fontFamily="DejaVu Sans" fontSize="6.500" fill="#3f3a4a" textLength="22">Region</text>
            </Chart>
          </Card>
          <Card cls="ml-[9px] h-[168px] w-[213px]" title="Total Sales by Product" tw={177}>
            <Chart x={273} y={295} w={211} h={130}>
              <Pie cx={354.500} cy={353} r={42.800} data={[[29.190, C.sky], [23.110, C.orange], [15.050, C.purple], [14.140, C.pink], [9.910, C.navy], [8.600, C.violet]]} />
              <Labels
                lines={["374,314 376.300,310 385,310", "339.700,305.300 348,305.300 349,310", "315.700,317.300 324.300,317.300 327,320", "299.300,365.500 311,365.500 313,364.700", "328.300,397.300 336.700,397.300 338.300,394", "364.300,396 365.300,400.300 374,400.300"]}
                labels={[["613K", 387.300, 305.500, 18, "start"], ["(29.19%)", 387.300, 316.300, 31.500, "start"], ["181K", 337.300, 300.500, 18, "end"], ["(8.6%)", 337.300, 312, 22, "end"], ["208K", 312.500, 311.500, 18, "end"], ["(9.91%)", 313, 322.300, 27.500, "end"], ["2…", 297, 360.500, 11, "end"], ["(…)", 297, 372.300, 11, "end"], ["316K", 325.500, 394, 18, "end"], ["(15.05%)", 325.500, 404.700, 31.500, "end"], ["486K", 376.500, 395.500, 18, "start"], ["(23.11%)", 376.500, 406.300, 31, "start"]]}
              />
              <Legend x={427.300} y={302} title="Product" tw={34.500} items={[["Shoes", 316, 24, C.sky], ["Shirt", 333, 18.500, C.orange], ["Hat", 350.500, 14, C.purple], ["Gloves", 368.700, 27, C.pink], ["Jacket", 386, 24.500, C.navy], ["Socks", 403.700, 23, C.violet]]} />
            </Chart>
          </Card>
          <Card cls="ml-[10px] h-[168px] w-[203px]" title="Total Sales by" tw={113}>
            <div className={"-mt-[6px] flex h-[24px] items-center pl-[9px] text-[17px] " + COMIC + HEAVY}><Fit w={148}>Quantity by Region</Fit></div>
            <RegionTable />
          </Card>
          <Card cls="ml-[10px] h-[168px] w-[217px]" title="Total Sales by Year" tw={164}>
            <Chart x={709} y={295} w={215} h={130}>
              <Pie cx={784} cy={353.500} r={41} data={[[52.600, C.sky], [47.400, C.navy]]} />
              <Labels lines={["744,319.300 752.700,319.300 756,322.300", "809,386 811.700,389.300 821,389.300"]} labels={[["1M", 741.300, 315, 11, "end"], ["(47.…)", 741.300, 326, 21.700, "end"], ["1M", 823.500, 385.500, 11, "start"], ["(52.…)", 823.500, 396.500, 21.700, "start"]]} />
              <Legend x={849.500} y={337} title="OrderDate Y..." tw={61} items={[["2023", 351.500, 20, C.sky], ["2024", 368.500, 20, C.navy]]} />
            </Chart>
          </Card>
        </div>
        <div className="mt-[27px] ml-[10px] flex">
          <Card cls="h-[173px] w-[208px]" title="Unit Price by Region" tw={157}>
            <Chart x={56} y={490} w={206} h={135}>
              <Pie cx={137} cy={550.700} r={43.700} data={[[32.480, C.sky], [29.070, C.orange], [19.650, C.navy], [18.800, C.purple]]} />
              <Labels
                lines={["114,503 122.300,503 124,508", "158.700,512 161.300,507.700 169.700,507.700", "86.300,575.300 94.700,575.300 99,573", "145,593.700 146,598.700 154.700,598.700"]}
                labels={[["55K", 111.500, 499.500, 13.500, "end"], ["(18.8%)", 111.700, 510.500, 27, "end"], ["94K", 172, 503.500, 13.500, "start"], ["(32.48%)", 172, 514.500, 31.500, "start"], ["57K", 83.500, 571.500, 13.500, "end"], ["(1…)", 83.500, 582.500, 15, "end"], ["84K", 157.300, 594.500, 13.500, "start"], ["(29.07%)", 157.300, 605.500, 31.500, "start"]]}
              />
              <Legend x={209} y={517} title="Region" tw={29.500} items={[["South", 531, 23.300, C.sky], ["North", 548.700, 23.300, C.orange], ["East", 566, 16, C.navy], ["West", 583.500, 20, C.purple]]} />
            </Chart>
          </Card>
          <Card cls="ml-[9px] h-[173px] w-[213px]" title="Quantity by Region" tw={157}>
            <Chart x={273} y={490} w={211} h={135}>
              <Pie cx={356.300} cy={551} r={44.300} inner={26.500} data={[[35.490, C.sky], [29.740, C.navy], [18.120, C.orange], [16.650, C.purple]]} />
              <Labels
                lines={["335.700,502.700 344,502.700 345,508", "379.700,513 383.300,508.700 391.700,508.700", "300.700,566.700 311.700,566.700 314,565.300", "347,600.300 355.700,600.300 355.700,595"]}
                labels={[["11K", 332.300, 498.500, 13.500, "end"], ["(16.65%)", 332.500, 509.500, 31.500, "end"], ["24K", 394, 504.500, 13.500, "start"], ["(35.49%)", 394, 515.500, 31.500, "start"], ["12K", 298.300, 562.500, 13.500, "end"], ["(1…)", 298.300, 573.500, 15, "end"], ["20K", 344.300, 596.500, 13.500, "end"], ["(29.74%)", 344.300, 607.500, 31.500, "end"]]}
              />
              <Legend x={430.700} y={517} title="Region" tw={30} items={[["South", 531, 23.300, C.sky], ["East", 548.700, 16, C.navy], ["North", 566.500, 23.300, C.orange], ["West", 583.700, 20, C.purple]]} />
            </Chart>
          </Card>
          <div className="relative ml-[10px] h-[173px] w-[203px] bg-white">
            <Card cls="h-[173px] w-[203px]" title="Product by Unit Price" tw={166}>
              <Chart x={496} y={490} w={201} h={135}>
                <Pie cx={572.700} cy={550.700} r={42.500} data={[[23.960, C.sky], [21.400, C.navy], [18.780, C.orange], [14.500, C.purple], [12.100, C.pink], [9.260, C.violet]]} />
                <Labels
                  lines={["589.300,511 591.700,506 599.300,506", "531,516.300 539.300,516.300 542.300,519.300", "521.300,571.700 530.700,571.700 534.700,569.700", "564,598.300 572.300,598.300 572.300,593.700"]}
                  labels={[["70K", 601.700, 501, 13.500, "start"], ["(23.96%)", 601.700, 512, 31.500, "start"], ["35K", 528.300, 512.500, 13.500, "end"], ["(11.…)", 528.300, 523.500, 21.500, "end"], ["4…", 519, 567.500, 11, "end"], ["(…)", 519, 578.700, 11, "end"], ["55K", 561.700, 593.500, 13.500, "end"], ["(18.78%)", 561.700, 604.500, 31.500, "end"]]}
                />
                <Legend x={640.700} y={498.700} title="Product" tw={34} items={[["Shoes", 513, 24, C.sky], ["Jacket", 531, 24.500, C.navy]]} />
                <circle cx="644.400" cy="600.700" r="3.600" fill={C.violet} />
              </Chart>
            </Card>
            <div className="absolute inset-0 border border-[#8f8c98]" />
            <div className="absolute -top-[20px] right-1 flex h-4 items-center gap-3">
              <Svg w={17} h={16}><path d="M1 1.500H16L10.500 8V12L6.500 15V8Z" stroke="#605e5c" /></Svg>
              <Svg w={16} h={14}><path d="M6 1.500H1.500V13H14.500V8M8.500 1H14.500V5.500M14 1.500L8 7.500M1.500 8.500H6V13" stroke="#605e5c" /></Svg>
              <Svg w={16} h={4}><path d="M.5 1h2.500v2H.5zM6.500 1h2.500v2h-2.500zM12.500 1h2.500v2h-2.500z" fill="#6b6966" /></Svg>
            </div>
            <div className="absolute top-[81px] left-[109px] z-10 flex h-[70px] w-[232px] flex-col justify-center bg-white pt-[3px] text-[13px] leading-[19px] text-[#323130]">
              <div className="flex"><span className="flex w-[114.500px] justify-end"><Fit w={46.500}>Product</Fit></span><Fit w={27.500} className="ml-[12px]">Shirt</Fit></div>
              <div className="flex"><span className="flex w-[114.500px] justify-end"><Fit w={99}>Sum of UnitPrice</Fit></span><Fit w={90} className="ml-[12px]">54520 (18.78%)</Fit></div>
              <Svg w={8} h={16} className="absolute top-[48px] -left-[7px]"><path d="M8 0V16L0 8Z" fill="#fff" /></Svg>
            </div>
          </div>
          <Card cls="ml-[10px] h-[173px] w-[217px]" title="Total Sales Per Month" tw={152} small>
            <MonthTable />
          </Card>
        </div>
      </div>
    </div>
  );
}

/* ---------- side areas ---------- */

function LeftRail() {
  return (
    <aside className="flex w-[42px] shrink-0 flex-col border-r border-[#dcdad8] bg-[#f3f2f1]">
      <div className="flex h-10 items-center border-l-[3px] border-[#117865] pl-[11px]"><Svg w={15} h={14}><path d="M.7 0V13.300H15M3.500 13V2.500H5.500V13M8 13V6H10V13M12 13V.7H13.800V13" stroke="#111" strokeWidth="1.200" /></Svg></div>
      <div className="flex h-[39px] items-center pl-[13px]"><Svg w={16} h={15}><path d="M.5 .5H15.500V14.500H.5ZM.5 4H15.500M.5 7.500H15.500M.5 11H15.500M5.500 4V14.500M10.500 4V14.500" stroke="#605e5c" /></Svg></div>
      <div className="flex h-[42px] items-center pl-[12px]"><Svg w={19} h={18}><path d="M.5 6.500H8V12.500H.5ZM11 .5H17.500V7H11ZM11 10.500H17.500V17H11ZM.5 8.500H8M11 3H17.500M11 13H17.500M5 6V3H11M5 12.500V15.500H11" stroke="#605e5c" /></Svg></div>
      <div className="flex h-[38px] items-center pl-[11px]"><Svg w={19} h={18}><path d="M4.500 9V1.500H10L14.500 6V9M9.500 1.500V6H14.500M15.500 5.500Q17.500 8 17 12.500Q16.500 15 14 15.500" stroke="#605e5c" /><text x="0" y="16.500" fontFamily="Open Sans" fontSize="7.500" fontWeight="600" fill="#605e5c" textLength="13.500">DAX</text></Svg></div>
    </aside>
  );
}

function PageTabs() {
  return (
    <div className="flex h-[35px] bg-[#f3f2f1] text-[12px]">
      <div className="flex w-[44px] flex-col items-center pt-[7px]">
        <Svg w={20} h={15} className="-ml-[4px]"><path d="M1 1H19V11.500H1ZM10 11.500V14M6 14.200H14" stroke="#605e5c" strokeWidth="1.500" /></Svg>
        <span className="mt-[6px] -ml-[4px] h-[3px] w-6 rounded-full bg-[#117865]" />
      </div>
      <Svg w={14} h={21} className="mt-[5px] ml-[14px]"><rect x="1" y="1" width="12" height="19" rx="1" stroke="#605e5c" strokeWidth="1.500" /><path d="M6 16.500h2" stroke="#605e5c" strokeWidth="1.500" /></Svg>
      <Svg w={5} h={8} className="mt-[14px] ml-5"><path d="M5 0V8L0 4Z" fill="#c0bebc" /></Svg>
      <Svg w={5} h={8} className="mt-[14px] ml-[17px]"><path d="M0 0V8L5 4Z" fill="#c0bebc" /></Svg>
      <div className="ml-[7px] flex w-[98px] justify-center border-r border-b-4 border-l border-r-[#c8c6c4] border-b-[#117865] border-l-[#a19f9d] bg-white pt-2.5 text-[#252423]"><Fit w={56.500}>Sales Data</Fit></div>
      <div className="flex w-[120px] justify-center bg-white pt-2.5 text-[#252423]"><Fit w={79.500}>Customer Data</Fit></div>
      <div className="flex w-[39px] items-center justify-center bg-[#117865]"><Svg w={11} h={11}><path d="M5.500 0V11M0 5.500H11" stroke="#fff" strokeWidth="2.600" /></Svg></div>
    </div>
  );
}

const Dots = () => <Svg w={15} h={3}><path d="M0 .5h2v2H0zM6.500 .5h2v2h-2zM13 .5h2v2h-2z" fill="#3b3a39" /></Svg>;
const DblRight = () => <Svg w={13} h={12}><path d="M1 0L6.500 6L1 12M6.500 0L12 6L6.500 12" stroke="#605e5c" /></Svg>;

const BUILD = ["bar1", "col1", "bar2", "col2", "bar3", "col3", "line", "area", "area2", "area3", "combo1", "combo2", "ribbon", "waterfall", "funnel", "scatter", "pie", "donut", "treemap", "globe", "fmap", "arrow", "gauge", "card", "rowcard", "kpi", "slicer", "table", "matrix", "R", "Py", "keyinf", "decomp", "qna", "narrative", "trophy", "paginated", "cardN", "slicerN", "arcgis", "papps", "automate"];

function BuildPane() {
  return (
    <aside className="flex w-[181px] shrink-0 flex-col border-l border-[#dcdad8] bg-[#f3f2f1] pl-[8px] text-[12px] text-[#323130]">
      <div className="flex h-[38px] items-center text-[15.500px] font-semibold"><Fit w={37} className="mt-[2px]">Build</Fit><span className="ml-[92px]"><Dots /></span><span className="ml-[7px]"><DblRight /></span></div>
      <div className="flex h-[20px] items-start leading-4"><Fit w={64}>Suggestions</Fit></div>
      <div className="h-[213px] w-[164px] rounded-[2px] border border-[#8a8886] bg-white pt-[6px] pl-[7px]">
        <div className="grid w-[156px] grid-cols-6 gap-y-2">{BUILD.map((n) => <Viz key={n} n={n} />)}</div>
        <Svg w={16} h={3} className="mt-[13px] ml-[1px]"><path d="M0 .5h2v2H0zM7 .5h2v2H7zM14 .5h2v2h-2z" fill="#5c4636" /></Svg>
      </div>
      <div className="flex h-[28px] items-center pt-[5px]"><Fit w={24}>Data</Fit></div>
      <div className="flex h-[40px] w-[164px] items-center justify-center border border-dashed border-[#605e5c]">
        <div className="flex h-[31px] w-[155px] items-center justify-center rounded-[2px] border border-[#605e5c] bg-white pt-px"><Fit w={57}>+Add data</Fit></div>
      </div>
    </aside>
  );
}

function DataPane() {
  return (
    <aside className="relative flex w-[182px] shrink-0 flex-col border-l border-[#dcdad8] bg-[#f3f2f1] text-[12px] text-[#323130]">
      <div className="flex h-[38px] items-center pl-[8px] text-[15.500px] font-semibold"><Fit w={34} className="mt-[2px]">Data</Fit><span className="ml-[94px]"><Dots /></span><span className="ml-2"><DblRight /></span></div>
      <div className="mt-[7px] ml-[4px] flex h-6 w-[172px] items-center rounded-[3px] border border-[#c8c6c4] border-b-[#605e5c] bg-white text-[#605e5c]">
        <Svg w={14} h={14} className="ml-[12px]"><circle cx="5.500" cy="5.500" r="4.800" stroke="#605e5c" /><path d="M9 9L13.500 13.500" stroke="#605e5c" /></Svg>
        <Fit w={41} className="mt-px ml-[7px] text-[12.500px]">Search</Fit>
      </div>
      <div className="mt-[10px]">
        {([["Customer Data", 79], ["Sales Data", 55]] as [string, number][]).map(([t, w]) => (
          <div key={t} className="flex h-6 items-center pl-[15px]">
            <Svg w={7} h={12}><path d="M.5 .5L6.500 6L.5 11.500" stroke="#605e5c" /></Svg>
            <Svg w={12} h={12} className="ml-[7px]"><rect x=".6" y=".6" width="10.800" height="10.800" rx="1.500" stroke="#323130" strokeWidth="1.200" /><path d="M4 0V12M8 0V12M0 4H12M0 8H12" stroke="#323130" /></Svg>
            <Fit w={w} className="ml-[5px]">{t}</Fit>
          </div>
        ))}
      </div>
      <div className="absolute bottom-[8px] -left-[80px] z-10 flex flex-col items-start text-[#a9a8a7]">
        <Fit w={157} className="text-[18px] leading-[24px]">Activate Windows</Fit>
        <Fit w={236} className="text-[13.500px] leading-[21px]">Go to Settings to activate Windows.</Fit>
      </div>
    </aside>
  );
}

function RightRail() {
  return (
    <aside className="flex w-8 shrink-0 flex-col border-l border-[#e1dfdd] bg-[#fafafa]">
      <div className="-ml-px flex h-8 w-8 items-center justify-center border border-[#605e5c] bg-[#e1dfdd]"><Svg w={15} h={18} className="-ml-px"><path d="M1 3.500V14.500C1 18 14 18 14 14.500V3.500" stroke="#323130" fill="#f3f2f1" /><ellipse cx="7.500" cy="3.500" rx="6.500" ry="2.700" fill="#fff" stroke="#323130" /></Svg></div>
      <div className="-ml-px flex h-8 w-8 items-center justify-center border border-[#605e5c] bg-[#e1dfdd]"><Svg w={19} h={20}><path d="M1 18.500V8.500H6V18.500ZM6 8V1.500H11V18.500H6M11 5H16V9" stroke="#323130" strokeWidth="1.200" /><path d="M10 10.500C10 8.500 18 8.500 18 10.500V17.500C18 19.500 10 19.500 10 17.500ZM10 10.500C10 12.500 18 12.500 18 10.500" fill="#fdf1e6" stroke="#dd6b10" strokeWidth="1.200" /></Svg></div>
      <div className="flex h-8 items-center justify-center"><Svg w={19} h={20}><path d="M1 16V8.500H6V14M6 8V1.500H11V12M11 5H15V8" stroke="#323130" strokeWidth="1.200" /><path d="M18 7L12 16L9 13L16 6Z" fill="#c8c6c4" stroke="#605e5c" /><path d="M9 13L12 16C10 19 7 19.500 4 18.500C6.500 17.500 6.500 14 9 13Z" fill="#4ba0e0" stroke="#0f63ad" /></Svg></div>
      <div className="flex h-8 items-center justify-center pr-px"><Svg w={17} h={17}><path d="M8.500 0V17M0 8.500H17" stroke="#111" strokeWidth="1.200" /></Svg></div>
      <div className="mt-auto flex h-8 items-center justify-center border-t border-[#dcdad8] pr-px">
        <Svg w={20} h={20}><path d="M8 1.500L8.500 3.500L11.500 3.500L12 1.500L15 2.700L14.500 5L16 7.500L19 8V12L16 12.500L14.500 15L15 17.300L12 18.500L11.500 16.500H8.500L8 18.500L5 17.300L5.500 15L4 12.500L1 12V8L4 7.500L5.500 5L5 2.700Z" stroke="#323130" strokeWidth="1.300" strokeLinejoin="round" /><circle cx="10" cy="10" r="2.800" stroke="#323130" strokeWidth="1.300" /></Svg>
      </div>
    </aside>
  );
}

function StatusBar() {
  return (
    <footer className="flex h-6 shrink-0 items-center border-t border-[#dcdad8] bg-[#f3f2f1] pt-[2px] text-[12px] text-[#484644]">
      <Fit w={59} className="ml-1">Page 1 of 2</Fit>
      <div className="ml-[899px] flex h-4 items-center">
        <span className="h-[2px] w-[4px] bg-[#605e5c]" />
        <span className="ml-[5px] h-px w-[32px] bg-[#605e5c]" /><span className="h-[11px] w-[3px] bg-[#484644]" />
        <span className="h-px w-[15px] bg-[#605e5c]" /><span className="h-[5px] w-px bg-[#605e5c]" /><span className="h-px w-[49px] bg-[#605e5c]" />
      </div>
      <Svg w={8} h={8} className="ml-[6px]"><path d="M4 0V8M0 4H8" stroke="#605e5c" /></Svg>
      <Fit w={23} className="ml-[13px] text-[11.500px]">69%</Fit>
      <Svg w={16} h={12} className="ml-[19px]"><path d="M.5 .5H15.500V11.500H.5Z" stroke="#605e5c" /><path d="M6 3H3.500V5M10 3H12.500V5M6 9H3.500V7M10 9H12.500V7" stroke="#605e5c" /></Svg>
      <Fit w={191.500} className="ml-[14px]">Update available (click to download)</Fit>
    </footer>
  );
}

/* ---------- taskbar ---------- */

function Pharaoh() {
  const gold = "#e8bd4f";
  const teal = "#1f6f86";
  return (
    <Svg w={64} h={39} className="mr-[4px] ml-auto">
      <path d="M15 39C10 30 11 3 27 1C43 3 44 30 40 39Z" fill={gold} />
      <path d="M19 7L13 17M17 15L12 23M18 20L12 28M18 26L12 33M20 31L14 38M35 7L41 17M37 15L42 23M36 20L42 28M36 26L42 33M34 31L40 38M22 3L24 8M27 1V9M32 3L30 8" stroke={teal} strokeWidth="2.200" />
      <path d="M18 10Q27 4 36 10L35 23C34 29 31 32 27 32S20 29 19 23Z" fill="#edc76a" />
      <path d="M18 11Q27 6 36 11" stroke={teal} strokeWidth="1.500" />
      <path d="M20.500 15Q23 13 25.500 16M28.500 16Q31 13 33.500 15" stroke="#20384a" strokeWidth="1.500" />
      <circle cx="23" cy="18" r="1.200" fill="#20384a" /><circle cx="31" cy="18" r="1.200" fill="#20384a" />
      <path d="M27 17V22M24.500 26H29.500" stroke="#a5702a" strokeWidth="1.500" />
      <path d="M26 1h3v8h-3z" fill="#c0492f" /><path d="M25.500 30h3.500v9h-3.500z" fill={teal} />
      <path d="M22 33L20 39M32 33L34 39" stroke={teal} strokeWidth="2" />
      <path d="M2 20L16 39M3 22V39" stroke="#c9943a" strokeWidth="2" /><path d="M1 30h4M1 35h4" stroke="#c0492f" strokeWidth="2.500" />
      <path d="M41 39L57 24C63 18 57 10 52 14Q49 17 51 20" stroke={gold} strokeWidth="3.200" />
      <path d="M41 39L57 24C63 18 57 10 52 14Q49 17 51 20" stroke={teal} strokeWidth="3.200" strokeDasharray="3 3.500" />
    </Svg>
  );
}

function Slot({ cls, children }: { cls: string; children: React.ReactNode }) {
  return <div className={"flex h-full shrink-0 items-center justify-center " + cls}>{children}</div>;
}

function Taskbar() {
  return (
    <footer className="flex h-[41px] shrink-0 items-center border-t border-black bg-[linear-gradient(90deg,#3d3a33_0%,#3a332b_25%,#392a24_45%,#382b26_65%,#3a3f3c_78%,#363b41_100%)] text-white">
      <Slot cls="w-12"><Svg w={16} h={16}><path d="M0 2.200L7 1.200V7.600H0ZM8 1L16 0V7.600H8ZM0 8.500H7V14.900L0 13.900ZM8 8.500H16V16L8 15Z" fill="#fff" /></Svg></Slot>
      <div className="flex h-full w-[288px] shrink-0 items-end border border-[#b9b8b6] bg-[#f2f2f2]">
        <Svg w={17} h={17} className="mb-[11px] ml-[11px]"><circle cx="10.500" cy="6.500" r="5.500" stroke="#222" strokeWidth="1.300" /><path d="M6.500 10.500L1 16" stroke="#222" strokeWidth="1.300" /></Svg>
        <Fit w={128} className="mb-[8px] ml-[11px] text-[14px] text-[#3b3a39]">Type here to search</Fit>
        <Pharaoh />
      </div>
      <Slot cls="w-[54px]">
        <Svg w={24} h={24}>
          <defs><linearGradient id="ed" x1="0" y1="1" x2="1" y2="0"><stop offset=".3" stopColor="#1479d4" /><stop offset=".6" stopColor="#26b8d8" /><stop offset="1" stopColor="#5ad65c" /></linearGradient></defs>
          <circle cx="12" cy="12" r="12" fill="url(#ed)" /><path d="M1 9C5 3 15 5 15 12C13 9 8 10 8 15C8 20 13 23 18 22C10 27 0 21 0 12Z" fill="#1168c9" /><path d="M15 11C13 13 13 16 17 17C20 17.500 22 17 24 15C22 19 17 20 13 17.500C10 15 12 11 15 11Z" fill="#2f322d" />
        </Svg>
      </Slot>
      <Slot cls="w-[44px]"><Svg w={22} h={20}><path d="M0 1H8L10 3H22V19H0Z" fill="#f2b11c" /><path d="M0 5H22V19H0Z" fill="#ffd45c" /><path d="M4 11H18V19H15V15H7V19H4Z" fill="#3f8fdb" /></Svg></Slot>
      <Slot cls="w-[52px]"><Svg w={24} h={24}><path d="M7 6V1.500H17V6" stroke="#39b3ea" strokeWidth="2" /><rect x="1" y="5" width="22" height="18" rx="2.500" fill="#f6f6f6" /><path d="M7 9h4.500v4.500H7z" fill="#f25022" /><path d="M12.500 9H17v4.500h-4.500z" fill="#7fba00" /><path d="M7 14.500h4.500V19H7z" fill="#00a4ef" /><path d="M12.500 14.500H17V19h-4.500z" fill="#ffb900" /></Svg></Slot>
      <Slot cls="w-[48px]"><Svg w={25} h={24}><path d="M.5 8L12.500 0L24.500 8V23H.5Z" fill="#1267b8" /><path d="M3 8H22V19H3Z" fill="#f4f7fa" /><path d="M.5 8L12.500 16L24.500 8V23H.5Z" fill="#2ba0ea" /><path d="M12.500 16L24.500 8V23Z" fill="#1683d8" /></Svg></Slot>
      <Slot cls="w-[50px]"><Svg w={23} h={24}><path d="M3 3C3 0 15 0 15 3V13C15 16 3 16 3 13Z" fill="#f3b833" /><ellipse cx="9" cy="3" rx="6" ry="2.200" fill="#ffdc7a" /><path d="M17 1H21V5M1.500 17V22H6" stroke="#4aa34c" strokeWidth="1.800" /><path d="M10 12L20 22M20 12L10 22" stroke="#9257b5" strokeWidth="2.500" /><path d="M8 12h4M18 11l3 3" stroke="#9257b5" strokeWidth="2" /></Svg></Slot>
      <div className="flex h-full w-[44px] shrink-0 flex-col items-center justify-between border-b-2 border-[#76b9ed] bg-[#665951] pt-[8px]">
        <Svg w={20} h={24} className="ml-1"><path d="M11 1.500Q11 0 12.500 0H18Q19.500 0 19.500 1.500V24H11Z" fill="#e0a10c" /><path d="M5.500 7.500Q5.500 6 7 6H12.500Q14 6 14 7.500V24H5.500Z" fill="#f2c230" /><path d="M.5 13.500Q.5 12 2 12H7Q8.500 12 8.500 13.500V24H2Q.5 24 .5 22.500Z" fill="#fbdc69" /></Svg>
      </div>
      <div className="h-full w-1 border-b-2 border-[#76b9ed] bg-[#514640]" />
      <Slot cls="w-[50px]"><Svg w={24} h={24}><ellipse cx="12" cy="9" rx="10" ry="8.500" fill="#e9e9ec" stroke="#c23a3a" strokeWidth="1.200" /><path d="M10 14L18 2M7 11L18 7" stroke="#888d94" strokeWidth="1.500" /><path d="M3 13L9 17" stroke="#c23a3a" strokeWidth="4" /><circle cx="14" cy="20" r="2.500" stroke="#1e7fcf" strokeWidth="1.800" /><circle cx="20" cy="16.500" r="2.500" stroke="#1e7fcf" strokeWidth="1.800" /></Svg></Slot>
      <Slot cls="w-[48px]"><Svg w={26} h={24}><path d="M9 4C9 -1 16 -1 15.500 4L14.500 7L20 6.500L21 10C26 8 27 15 22 14.500L19 14L21 20L15 22C15 17 9.500 17 10 22L4 20L6 15C2 18-1 12 3 10.500L6 11L4.500 6.500L10 7Z" fill="#fff" /></Svg></Slot>
      <div className="ml-[5px] flex h-full w-[40px] flex-col items-center justify-between border-b-2 border-[#76b9ed] pt-[8px]"><Svg w={23} h={24}><ellipse cx="11.500" cy="12" rx="8" ry="9.500" stroke="#e8202c" strokeWidth="4" /><ellipse cx="11.500" cy="12" rx="4.500" ry="8" stroke="#b40f1c" strokeWidth="1.500" /></Svg></div>
      <div className="ml-auto flex h-full items-center">
        <Svg w={12} h={7}><path d="M1 6.500L6 1.500L11 6.500" stroke="#fff" strokeWidth="1.200" /></Svg>
        <Svg w={13} h={16} className="ml-[13px]"><path d="M2 4.500H9V12.500H2ZM9 7L12 5.500V11.500L9 10M3 1.500Q6 0 9 1.500M3 15Q6 16.500 9 15" stroke="#fff" strokeWidth="1.200" /></Svg>
        <Svg w={14} h={14} className="ml-[11px]"><path d="M2 13Q1 3 13 2M5 13Q5 6 13 5.500M8 13Q8 9 13 9" stroke="#fff" strokeWidth="1.100" /><circle cx="12" cy="12.500" r="1.300" fill="#fff" /></Svg>
        <Svg w={17} h={14} className="ml-[8px]"><path d="M5.500 4.500H14.500V12.500H4V8M15 7h1.500v3H15M2 0V3M5 0V3M.8 3H6.200V5.500L3.500 7.500L.8 5.500Z" stroke="#fff" strokeWidth="1.100" /><path d="M7.500 6.500h5.500v4H7.500z" fill="#fff" /></Svg>
        <Svg w={17} h={14} className="ml-[7px]"><path d="M.6 5H3L6.500 1.500V12.500L3 9H.6ZM9 4.500Q10.500 7 9 9.500M11.500 2.500Q14 7 11.500 11.500M14 .8Q18 7 14 13.200" stroke="#fff" strokeWidth="1.100" /></Svg>
        <div className="ml-[8px] flex w-[54px] flex-col items-center text-[11.500px] leading-[18px]"><Fit w={48}>10:18 PM</Fit><Fit w={52}>11/4/2024</Fit></div>
        <Svg w={26} h={26} className="mt-1 ml-[16px]"><path d="M1 1H16V14H7L4 17V14H1Z" fill="#fff" /><path d="M3.500 4.500H13.500M3.500 7.500H13.500M3.500 10.500H9" stroke="#333" /><circle cx="16.500" cy="16.500" r="8" fill="#36393d" stroke="#c7c7c7" /><text x="16.500" y="20.500" textAnchor="middle" fontFamily="Open Sans" fontSize="11" fill="#fff">2</text></Svg>
        <span className="mr-[4px] ml-[11px] h-full w-px bg-[#6a6d70]" />
      </div>
    </footer>
  );
}

export default function App() {
  return (
    <div className="flex h-[768px] w-[1366px] flex-col overflow-hidden bg-[#fafafa] font-['Open_Sans','Noto_Sans',sans-serif]">
      <TitleBar />
      <Tabs />
      <Ribbon />
      <div className="flex h-[543px] shrink-0">
        <LeftRail />
        <main className="flex w-[929px] shrink-0 flex-col">
          <div className="flex">
            <Canvas />
            <div className="flex w-[32px] flex-col items-center bg-white pt-[13px]">
              <Svg w={13} h={12} className="ml-px"><path d="M6.500 0L1 6L6.500 12M12 0L6.500 6L12 12" stroke="#323130" /></Svg>
              <Svg w={13} h={12} className="mt-[17px] ml-[4px]"><path d="M12 1V11L6.500 8H1L4 4.500H6.500Z" stroke="#323130" strokeWidth="1.200" /></Svg>
              <div className="mt-[8px] h-[46px] text-[14.500px] leading-[20px] font-semibold text-[#323130] [writing-mode:vertical-rl]">Filters</div>
            </div>
          </div>
          <PageTabs />
        </main>
        <BuildPane />
        <DataPane />
        <RightRail />
      </div>
      <StatusBar />
      <Taskbar />
    </div>
  );
}
